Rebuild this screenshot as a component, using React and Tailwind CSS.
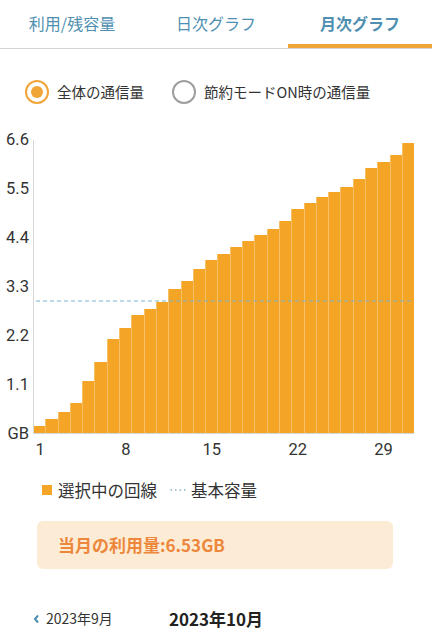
import React from "react";

const data = [0.16, 0.31, 0.48, 0.67, 1.17, 1.6, 2.1, 2.36, 2.66, 2.79, 2.94, 3.23, 3.42, 3.69, 3.89, 4.01, 4.18, 4.31, 4.45, 4.58, 4.76, 5.03, 5.17, 5.3, 5.41, 5.52, 5.71, 5.94, 6.08, 6.23, 6.5];
const PLOT_H = 294;
const MAX = 6.6;
const yLabels = ["6.6", "5.5", "4.4", "3.3", "2.2", "1.1", "GB"];
const xLabels = { 0: "1", 7: "8", 14: "15", 21: "22", 28: "29" };

const jp = { fontFamily: '"Noto Sans CJK JP", "Noto Sans", sans-serif' };
const num = { fontFamily: 'Roboto, "Noto Sans", sans-serif' };

export default function App() {
  return (
    <div className="w-[432px] h-[640px] bg-white overflow-hidden" style={jp}>
      {/* Tabs */}
      <div className="flex h-[49px] border-b border-[#d4d4d4]">
        <div className="flex-1 relative flex items-center justify-center pb-[3px] text-[16px] text-[#4f8fb1]">利用/残容量</div>
        <div className="flex-1 relative flex items-center justify-center pb-[3px] text-[16px] text-[#4f8fb1]">日次グラフ</div>
        <div className="flex-1 relative flex items-center justify-center pb-[3px] text-[16px] font-bold text-[#4f8fb1]">
          月次グラフ
          <div className="absolute left-0 right-0 bottom-0 h-[4px] bg-[#f0a537]" />
        </div>
      </div>

      {/* Radios */}
      <div className="mt-[31px] flex items-center h-[24px]">
        <div className="ml-[25px] w-[24px] h-[24px] rounded-full border-[2.5px] border-[#f0a537] flex items-center justify-center">
          <div className="w-[12px] h-[12px] rounded-full bg-[#f0a537]" />
        </div>
        <span className="ml-[8px] text-[14.5px] text-[#333]">全体の通信量</span>
        <div className="ml-[28px] w-[24px] h-[24px] rounded-full border-[2.5px] border-[#9e9e9e]" />
        <span className="ml-[8px] text-[14.5px] text-[#333]">節約モードON時の通信量</span>
      </div>

      {/* Chart */}
      <div className="mt-[26px] flex">
        <div className="w-[33px] h-[314px] flex flex-col justify-between items-end pr-[4px]" style={num}>
          {yLabels.map((l) => (
            <div key={l} className="h-[20px] leading-[20px] text-[16.5px] text-[#333]">{l}</div>
          ))}
        </div>
        <div className="flex flex-col">
          <div className="mt-[10px] relative w-[381px] h-[294px] border-l border-b border-[#d6d6d6] flex items-end">
            {data.map((v, i) => (
              <div
                key={i}
                className="flex-1 min-w-0 bg-[#f4a526] border-l border-[#f7bf68] first:border-l-0"
                style={{ height: `${(v / MAX) * PLOT_H}px` }}
              />
            ))}
            <svg className="absolute left-[2px] pointer-events-none" style={{ bottom: "131px" }} width="378" height="2">
              <line x1="0" y1="1" x2="378" y2="1" stroke="#77b3cc" strokeWidth="1" strokeDasharray="4 3" />
            </svg>
          </div>
          <div className="mt-[6px] flex w-[381px] pl-[1px] h-[20px]" style={num}>
            {data.map((_, i) => (
              <div key={i} className="flex-1 min-w-0 flex justify-center">
                {xLabels[i] && (
                  <span className="whitespace-nowrap leading-[20px] text-[16.5px] text-[#333]">{xLabels[i]}</span>
                )}
              </div>
            ))}
          </div>
        </div>
      </div>

      {/* Legend */}
      <div className="mt-[18px] h-[24px] flex items-center ml-[42px]">
        <div className="w-[10px] h-[10px] bg-[#f4a526]" />
        <span className="ml-[6px] text-[16.5px] text-[#333]">選択中の回線</span>
        <svg className="ml-[13px]" width="18" height="4">
          <line x1="0.5" y1="2" x2="18" y2="2" stroke="#84b6cc" strokeWidth="1.3" strokeDasharray="1.5 3" />
        </svg>
        <span className="ml-[3px] text-[16.5px] text-[#333]">基本容量</span>
      </div>

      {/* Summary */}
      <div className="mt-[19px] ml-[37px] w-[356px] h-[48px] rounded-[6px] bg-[#fdecd5] flex items-center pl-[21px]">
        <span className="text-[17px] font-bold text-[#ec873c]">当月の利用量:6.53GB</span>
      </div>

      {/* Month nav */}
      <div className="mt-[37px] h-[24px] grid grid-cols-3 items-center">
        <div className="flex items-center pl-[33px]">
          <svg width="7" height="10" viewBox="0 0 7 10">
            <polyline points="5,1.5 2,5 5,8.5" fill="none" stroke="#4f8fb1" strokeWidth="2" />
          </svg>
          <span className="ml-[6px] text-[14px] text-[#333]">2023年9月</span>
        </div>
        <div className="text-center text-[17px] font-bold text-[#222]">2023年10月</div>
        <div />
      </div>
    </div>
  );
}
